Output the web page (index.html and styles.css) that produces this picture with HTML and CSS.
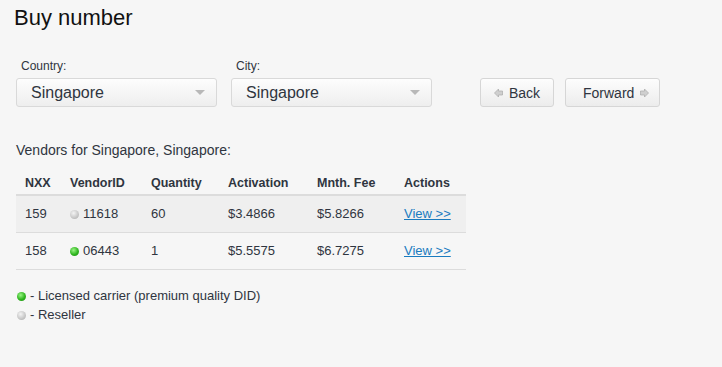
FILE: index.html
```html
<!DOCTYPE html>
<html lang="en">

<head>
    <meta charset="UTF-8">
    <title>Buy number</title>
    <link rel="stylesheet" href="styles.css">
</head>

<body>
    <div class="page">
        <h1>Buy number</h1>

        <!-- Filters -->
        <div class="filters">
            <div class="field">
                <label>Country:</label>
                <div class="select">
                    <span>Singapore</span>
                    <span class="caret"></span>
                </div>
            </div>
            <div class="field">
                <label>City:</label>
                <div class="select">
                    <span>Singapore</span>
                    <span class="caret"></span>
                </div>
            </div>
            <div class="nav">
                <button class="btn btn-back">
                    <svg width="9" height="10" viewBox="0 0 9 10"><polygon points="0.5,5 4.5,1 4.5,3 8.5,3 8.5,7 4.5,7 4.5,9" fill="#cfcfcf" stroke="#aaa" stroke-width="0.7"/></svg>
                    Back
                </button>
                <button class="btn btn-forward">
                    Forward
                    <svg width="9" height="10" viewBox="0 0 9 10"><polygon points="8.5,5 4.5,1 4.5,3 0.5,3 0.5,7 4.5,7 4.5,9" fill="#cfcfcf" stroke="#aaa" stroke-width="0.7"/></svg>
                </button>
            </div>
        </div>

        <!-- Vendors -->
        <h2>Vendors for Singapore, Singapore:</h2>
        <table class="vendors">
            <colgroup>
                <col style="width:45px">
                <col style="width:81px">
                <col style="width:77px">
                <col style="width:89px">
                <col style="width:87px">
                <col style="width:71px">
            </colgroup>
            <thead>
                <tr>
                    <th>NXX</th>
                    <th>VendorID</th>
                    <th>Quantity</th>
                    <th>Activation</th>
                    <th>Mnth. Fee</th>
                    <th>Actions</th>
                </tr>
            </thead>
            <tbody>
                <tr class="odd">
                    <td>159</td>
                    <td><span class="dot dot-grey"></span>11618</td>
                    <td>60</td>
                    <td>$3.4866</td>
                    <td>$5.8266</td>
                    <td><a href="#">View &gt;&gt;</a></td>
                </tr>
                <tr>
                    <td>158</td>
                    <td><span class="dot dot-green"></span>06443</td>
                    <td>1</td>
                    <td>$5.5575</td>
                    <td>$6.7275</td>
                    <td><a href="#">View &gt;&gt;</a></td>
                </tr>
            </tbody>
        </table>

        <!-- Legend -->
        <div class="legend">
            <div><span class="dot dot-green"></span>- Licensed carrier (premium quality DID)</div>
            <div><span class="dot dot-grey"></span>- Reseller</div>
        </div>
    </div>
</body>

</html>
```

FILE: styles.css
```css
/* Reset */

* {
    margin: 0;
    padding: 0;
    box-sizing: border-box;
}

body {
    font-family: 'Liberation Sans', Arial, sans-serif;
    background-color: #f6f6f6;
    color: #2f3540;
    width: 722px;
    height: 367px;
    overflow: hidden;
}

.page {
    padding: 5px 16px 0 16px;
}

/* Title */

h1 {
    font-size: 22px;
    font-weight: normal;
    line-height: 26px;
    color: #111;
    margin-left: -2px;
}

/* Filters row */

.filters {
    display: flex;
    align-items: flex-end;
    margin-top: 28px;
}

.field {
    display: flex;
    flex-direction: column;
    margin-right: 14px;
}

.field label {
    font-size: 12px;
    line-height: 15px;
    margin-left: 5px;
    margin-bottom: 4px;
}

.select {
    width: 201px;
    height: 29px;
    border: 1px solid #d9d9d9;
    border-radius: 3px;
    background: linear-gradient(#fdfdfd, #eeeeee);
    display: flex;
    align-items: center;
    justify-content: space-between;
    padding: 0 11px 0 14px;
    font-size: 16px;
    color: #2f3540;
}

.caret {
    width: 0;
    height: 0;
    border-left: 5px solid transparent;
    border-right: 5px solid transparent;
    border-top: 5px solid #b8b8b8;
}

.nav {
    display: flex;
    gap: 11px;
    margin-left: 34px;
}

.btn {
    height: 29px;
    border: 1px solid #d6d6d6;
    border-radius: 3px;
    background: linear-gradient(#fdfdfd, #ececec);
    font-family: inherit;
    font-size: 14px;
    color: #2f3540;
    display: flex;
    align-items: center;
    gap: 6px;
}

.btn-back {
    width: 74px;
    padding-left: 13px;
}

.btn-forward {
    width: 95px;
    padding-left: 17px;
}

/* Vendors table */

h2 {
    font-size: 14px;
    font-weight: normal;
    line-height: 18px;
    margin-top: 34px;
}

.vendors {
    width: 450px;
    border-collapse: collapse;
    table-layout: fixed;
    margin-top: 12px;
    font-size: 13px;
}

.vendors th {
    text-align: left;
    font-size: 12.5px;
    font-weight: bold;
    padding: 4px 0 4px 9px;
    height: 24px;
    border-bottom: 2px solid #dcdcdc;
}

.vendors td {
    padding: 0 0 0 9px;
    height: 37px;
    border-bottom: 1px solid #dcdcdc;
}

.vendors tr.odd td {
    background-color: #efefef;
}

.vendors a {
    color: #1a7bbf;
    text-decoration: underline;
}

/* Status dots */

.dot {
    display: inline-block;
    width: 9px;
    height: 9px;
    border-radius: 50%;
    margin-right: 4px;
    vertical-align: -1px;
}

.dot-green {
    background: radial-gradient(circle at 40% 35%, #9af585, #2fb51f 55%, #1c8a12);
}

.dot-grey {
    background: radial-gradient(circle at 40% 35%, #f4f4f4, #cacaca 55%, #a6a6a6);
}

/* Legend */

.legend {
    margin-top: 16px;
    font-size: 13px;
    line-height: 19px;
    margin-left: 1px;
}
```
